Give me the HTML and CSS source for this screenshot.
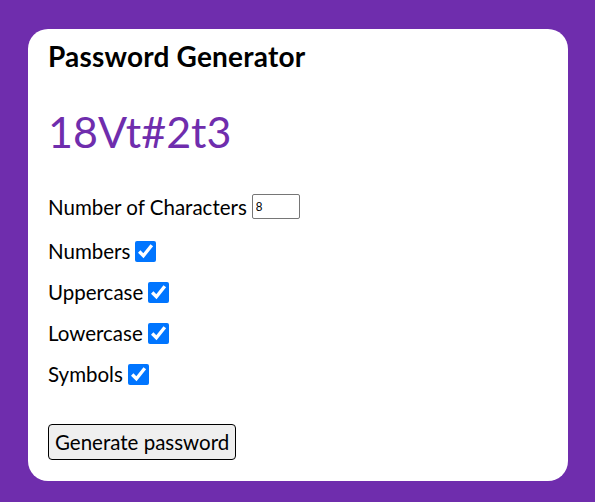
FILE: index.html
```html
<!DOCTYPE html>
<html>
<head>
<meta charset="utf-8">
<link rel="stylesheet" href="styles.css">
</head>
<body>
<main class="card">
  <h1 class="title">Password Generator</h1>
  <div class="password">18Vt#2t3</div>
  <form class="options">
    <label class="option first">Number of Characters <input class="count" type="number" value="8"></label>
    <label class="option">Numbers <input class="check" type="checkbox" checked></label>
    <label class="option">Uppercase <input class="check" type="checkbox" checked></label>
    <label class="option">Lowercase <input class="check" type="checkbox" checked></label>
    <label class="option">Symbols <input class="check" type="checkbox" checked></label>
    <button class="generate" type="button">Generate password</button>
  </form>
</main>
</body>
</html>
```
FILE: styles.css
```css
html, body {
  margin: 0;
  padding: 0;
}
body {
  background: #6f2dad;
  font-family: Lato, "Open Sans", sans-serif;
  color: #000;
  padding: 29px 27px 21px 28px;
  height: 502px;
  box-sizing: border-box;
}
.card {
  background: #fff;
  border-radius: 20px;
  padding: 11px 20px 20px 20px;
  height: 452px;
  box-sizing: border-box;
  display: flex;
  flex-direction: column;
}
.title {
  margin: 0;
  font-size: 28px;
  line-height: 32px;
  font-weight: 700;
  letter-spacing: 0.2px;
}
.password {
  margin-top: 34px;
  font-size: 43px;
  line-height: 52px;
  color: #6f2dad;
}
.options {
  margin-top: 36px;
  display: flex;
  flex-direction: column;
  align-items: flex-start;
  gap: 17px;
}
.option {
  font-size: 20.5px;
  line-height: 24px;
  display: flex;
  align-items: center;
  gap: 5px;
}
.option.first {
  margin-bottom: 3px;
}
.count {
  width: 48px;
  height: 25px;
  box-sizing: border-box;
  font-size: 12px;
  padding: 2px 3px;
  border: 1px solid #767676;
  border-radius: 2px;
  margin: 0;
}
.check {
  width: 21px;
  height: 21px;
  margin: 0;
  accent-color: #0075ff;
}
.generate {
  margin-top: 21px;
  font-family: inherit;
  font-size: 20.5px;
  height: 36px;
  padding: 0 6px;
  background: #efefef;
  border: 1px solid #000;
  border-radius: 4px;
  color: #000;
}
```
